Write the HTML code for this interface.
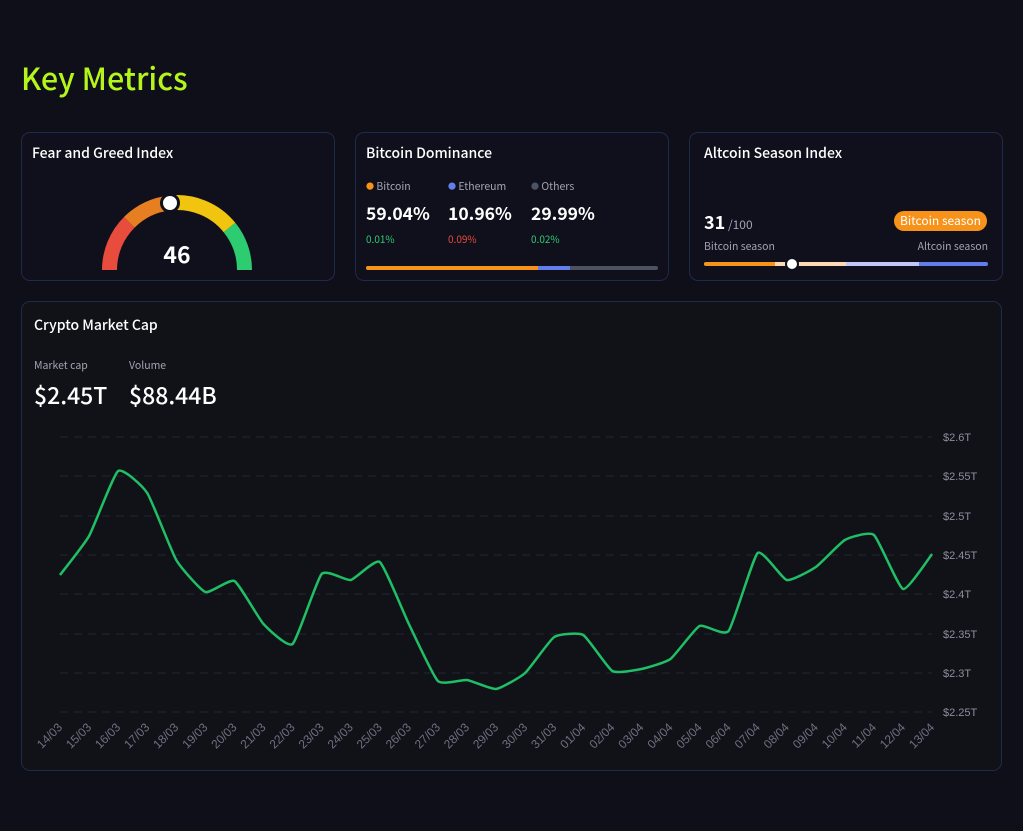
<!DOCTYPE html>
<html><head><meta charset="utf-8"><style>
*{margin:0;padding:0;box-sizing:border-box}
body{width:1023px;height:831px;background:#0f0f1a;font-family:"Noto Sans CJK SC","Liberation Sans",sans-serif;color:#fff;position:relative;overflow:hidden}
.a{position:absolute}
.card{position:absolute;border:1px solid #1c2c4a;border-radius:9px;background:#10101c}
.t{font-size:14px;font-weight:500;position:absolute}
.s{font-size:10.5px;color:#a0a4b2;position:absolute}
</style></head><body>
<div class="a" style="left:21px;top:55px;font-size:30.5px;font-weight:500;color:#b4f51b">Key Metrics</div>

<div class="card" style="left:21px;top:132px;width:314px;height:149px">
<div class="t" style="left:10px;top:10px">Fear and Greed Index</div>
</div>
<svg class="a" style="left:0;top:0" width="340" height="290">
<g fill="none" stroke-width="15">
<path d="M109.5 270 A67.5 67.5 0 0 1 129.3 222.3" stroke="#e74c3c"/>
<path d="M129.3 222.3 A67.5 67.5 0 0 1 169.9 202.9" stroke="#e67e22"/>
<path d="M169.9 202.9 A67.5 67.5 0 0 1 229.5 227.5" stroke="#f1c40f"/>
<path d="M229.5 227.5 A67.5 67.5 0 0 1 244.5 270" stroke="#2ecc71"/>
</g>
<circle cx="170" cy="203" r="8.5" fill="#fff" stroke="#10101c" stroke-width="3"/>
<text x="177" y="263" text-anchor="middle" font-size="23" font-weight="700" fill="#fff" font-family="Noto Sans CJK SC,Liberation Sans,sans-serif">46</text>
</svg>

<div class="card" style="left:355px;top:132px;width:314px;height:149px">
<div class="t" style="left:10px;top:10px">Bitcoin Dominance</div>
<div class="s" style="left:10px;top:46px"><span style="color:#f7931a;font-size:8px;vertical-align:1px">●</span> Bitcoin</div>
<div class="s" style="left:92px;top:46px"><span style="color:#627eea;font-size:8px;vertical-align:1px">●</span> Ethereum</div>
<div class="s" style="left:175px;top:46px"><span style="color:#4a5263;font-size:8px;vertical-align:1px">●</span> Others</div>
<div class="a" style="left:10px;top:68px;font-size:17.5px;font-weight:700">59.04%</div>
<div class="a" style="left:92px;top:68px;font-size:17.5px;font-weight:700">10.96%</div>
<div class="a" style="left:175px;top:68px;font-size:17.5px;font-weight:700">29.99%</div>
<div class="a" style="left:10px;top:98px;font-size:10px;color:#2ecc71">0.01%</div>
<div class="a" style="left:92px;top:98px;font-size:10px;color:#e74c3c">0.09%</div>
<div class="a" style="left:175px;top:98px;font-size:10px;color:#2ecc71">0.02%</div>
<div class="a" style="left:10px;top:133px;width:292px;height:4px;border-radius:2px;background:#4a5263;overflow:hidden">
<div class="a" style="left:0;top:0;width:172px;height:4px;background:#f7931a"></div>
<div class="a" style="left:172px;top:0;width:32px;height:4px;background:#627eea"></div></div>
</div>

<div class="card" style="left:689px;top:132px;width:314px;height:149px">
<div class="t" style="left:14px;top:10px">Altcoin Season Index</div>
<div class="a" style="left:14px;top:76px;font-size:18px;font-weight:700">31<span style="font-size:12px;font-weight:400;color:#a0a4b2"> /100</span></div>
<div class="a" style="left:204px;top:78px;height:20px;padding:0 6px;border-radius:10px;background:#f7931a;font-size:12px;line-height:20px">Bitcoin season</div>
<div class="s" style="left:14px;top:106px">Bitcoin season</div>
<div class="s" style="right:14px;top:106px">Altcoin season</div>
<div class="a" style="left:14px;top:129px;width:284px;height:4px;border-radius:2px;overflow:hidden;background:#627eea">
<div class="a" style="left:0;width:71px;height:4px;background:#f7931a"></div>
<div class="a" style="left:71px;width:71px;height:4px;background:#fcd9b4"></div>
<div class="a" style="left:142px;width:73px;height:4px;background:#c1c8f7"></div></div>
<div class="a" style="left:95px;top:124px;width:14px;height:14px;border-radius:50%;background:#fff;border:2px solid #10101c"></div>
</div>

<div class="card" style="left:21px;top:301px;width:981px;height:470px;background:#111218">
<div class="t" style="left:12px;top:13px">Crypto Market Cap</div>
<div class="s" style="left:12px;top:56px">Market cap</div>
<div class="s" style="left:107px;top:56px">Volume</div>
<div class="a" style="left:12px;top:75px;font-size:23px;font-weight:500">$2.45T</div>
<div class="a" style="left:107px;top:75px;font-size:23px;font-weight:500">$88.44B</div>
</div>
<svg class="a" style="left:0;top:0" width="1023" height="831" font-family="Liberation Sans,sans-serif">
<g stroke="#22252e" stroke-dasharray="8 6" stroke-width="1">
<line x1="60" x2="932" y1="437" y2="437"/><line x1="60" x2="932" y1="476" y2="476"/><line x1="60" x2="932" y1="516" y2="516"/><line x1="60" x2="932" y1="555" y2="555"/><line x1="60" x2="932" y1="594" y2="594"/><line x1="60" x2="932" y1="634" y2="634"/><line x1="60" x2="932" y1="673" y2="673"/><line x1="60" x2="932" y1="712" y2="712"/>
</g>
<g fill="#8a8f9c" font-size="11">
<text x="943" y="441">$2.6T</text><text x="943" y="480">$2.55T</text><text x="943" y="520">$2.5T</text><text x="943" y="559">$2.45T</text><text x="943" y="598">$2.4T</text><text x="943" y="638">$2.35T</text><text x="943" y="677">$2.3T</text><text x="943" y="716">$2.25T</text>
</g>
<path id="ln" fill="none" stroke="#1fbf66" stroke-width="2.5" stroke-linejoin="round" d=""/>
<g fill="#6c7180" font-size="12" text-anchor="end" id="lb"></g>
</svg>
<script>
var ys=[575,536,471,493,560,592,581,624,644,574,580,562,624,681,680,689,673,637,635,671,669,659,626,631,553,580,567,540,535,589,554];
var P=ys.map(function(y,i){return [60+i*29.07,y]});
var s="M"+P[0][0]+" "+P[0][1];
for(var i=0;i<P.length-1;i++){var p0=P[i-1]||P[i],p1=P[i],p2=P[i+1],p3=P[i+2]||p2,k=0.08;
s+=" C"+(p1[0]+(p2[0]-p0[0])*k)+" "+(p1[1]+(p2[1]-p0[1])*k)+" "+(p2[0]-(p3[0]-p1[0])*k)+" "+(p2[1]-(p3[1]-p1[1])*k)+" "+p2[0]+" "+p2[1];}
document.getElementById("ln").setAttribute("d",s);
var d=["14/03","15/03","16/03","17/03","18/03","19/03","20/03","21/03","22/03","23/03","24/03","25/03","26/03","27/03","28/03","29/03","30/03","31/03","01/04","02/04","03/04","04/04","05/04","06/04","07/04","08/04","09/04","10/04","11/04","12/04","13/04"],g=document.getElementById("lb"),h="";
for(var i=0;i<31;i++){var x=63+i*29.07,y=728;h+='<text transform="translate('+x+' '+y+') rotate(-45)">'+d[i]+'</text>';}
g.innerHTML=h;
</script>
</body></html>
